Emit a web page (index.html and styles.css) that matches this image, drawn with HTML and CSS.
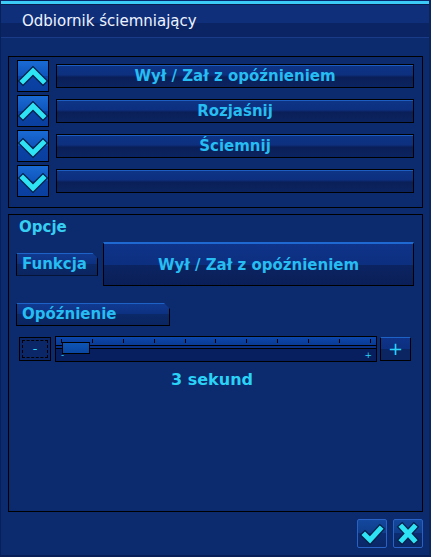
FILE: index.html
```html
<!DOCTYPE html>
<html>
<head>
	<meta charset="utf-8">
	<title>Odbiornik ściemniający</title>
	<link rel="stylesheet" href="styles.css">
</head>
<body>
<div class="window">
	<div class="topbar"></div>
	<div class="titlebar">Odbiornik ściemniający</div>

	<div class="content">
		<!-- lista akcji -->
		<div class="panel actions">
			<div class="row">
				<button type="button" class="arrow">
					<svg width="30" height="30" viewBox="0 0 30 30"><polyline class="edge" points="5,20 15,10 25,20"/><polyline class="fill" points="5,20 15,10 25,20"/></svg>
				</button>
				<div class="bar">Wył / Zał z opóźnieniem</div>
			</div>
			<div class="row">
				<button type="button" class="arrow">
					<svg width="30" height="30" viewBox="0 0 30 30"><polyline class="edge" points="5,20 15,10 25,20"/><polyline class="fill" points="5,20 15,10 25,20"/></svg>
				</button>
				<div class="bar">Rozjaśnij</div>
			</div>
			<div class="row">
				<button type="button" class="arrow">
					<svg width="30" height="30" viewBox="0 0 30 30"><polyline class="edge" points="5,12 15,22 25,12"/><polyline class="fill" points="5,12 15,22 25,12"/></svg>
				</button>
				<div class="bar">Ściemnij</div>
			</div>
			<div class="row">
				<button type="button" class="arrow">
					<svg width="30" height="30" viewBox="0 0 30 30"><polyline class="edge" points="5,12 15,22 25,12"/><polyline class="fill" points="5,12 15,22 25,12"/></svg>
				</button>
				<div class="bar"></div>
			</div>
		</div>

		<!-- opcje -->
		<div class="panel options">
			<div class="heading">Opcje</div>
			<div class="func-row">
				<div class="tab">Funkcja</div>
				<button type="button" class="func-value">Wył / Zał z opóźnieniem</button>
			</div>
			<div class="tab delay-tab">Opóźnienie</div>
			<div class="slider-row">
				<button type="button" class="step minus"><span class="focus">-</span></button>
				<div class="track">
					<div class="ticks">
						<span></span><span></span><span></span><span></span><span></span><span></span>
						<span></span><span></span><span></span><span></span><span></span>
					</div>
					<div class="mid"></div>
					<div class="low"><span>-</span><span>+</span></div>
					<div class="thumb"></div>
				</div>
				<button type="button" class="step plus">+</button>
			</div>
			<div class="value">3 sekund</div>
		</div>

		<div class="footer">
			<button type="button" class="action">
				<svg width="28" height="27" viewBox="0 0 28 27"><polyline class="edge" points="7,15 12,20 22,9"/><polyline class="fill" points="7,15 12,20 22,9"/></svg>
			</button>
			<button type="button" class="action">
				<svg width="28" height="27" viewBox="0 0 28 27"><path class="edge" d="M8 7 L20 20 M20 7 L8 20"/><path class="fill" d="M8 7 L20 20 M20 7 L8 20"/></svg>
			</button>
		</div>
	</div>
</div>
</body>
</html>
```

FILE: styles.css
```css
body
{
	margin:0;
	background-color:#0c2a6e;
	font-family:"DejaVu Sans", sans-serif;
}
.window
{
	width:431px;
	height:557px;
	box-sizing:border-box;
	display:flex;
	flex-direction:column;
	border-left:1px solid #08205a;
	border-right:2px solid #0a2460;
	border-bottom:2px solid #081e56;
}
.topbar
{
	height:5px;
	background:linear-gradient(#0a2a70 0 1px, #3ccaf6 1px 4px, #0a1e50 4px);
}
.titlebar
{
	height:32px;
	line-height:32px;
	padding-left:21px;
	font-size:15px;
	color:#eef3ff;
	background:linear-gradient(#0f2f7a 55%, #0b2564 55%);
	border-bottom:1px solid #1a3c88;
}
.content
{
	flex:1;
	display:flex;
	flex-direction:column;
	padding:0 6px 0 7px;
}
.panel
{
	border:1px solid #000;
}
.actions
{
	margin-top:18px;
	padding:3px 8px 10px 8px;
	display:flex;
	flex-direction:column;
	gap:3px;
}
.row
{
	display:flex;
	align-items:center;
	gap:7px;
}
button
{
	font-family:inherit;
	padding:0;
	cursor:pointer;
}
.arrow
{
	width:32px;
	height:32px;
	border:1px solid #000;
	background:linear-gradient(#1a6ad4, #0e55bc 50%, #0a42a6 50%, #0a3f9e);
	display:flex;
	align-items:center;
	justify-content:center;
}
svg .edge
{
	fill:none;
	stroke:#05204a;
	stroke-width:7.5;
	stroke-linejoin:miter;
	stroke-linecap:square;
}
svg .fill
{
	fill:none;
	stroke:#2ee4f4;
	stroke-width:5;
	stroke-linejoin:miter;
	stroke-linecap:square;
}
.bar
{
	flex:1;
	height:24px;
	box-sizing:border-box;
	border:1px solid #000;
	background:linear-gradient(#1d5cc0 0 1px, #0e3486 1px, #0d2f7e 45%, #0a1f58 55%, #0b2460);
	color:#26bdf2;
	font-weight:bold;
	font-size:15px;
	line-height:22px;
	text-align:center;
}
.options
{
	flex:1;
	margin-top:6px;
	padding:3px 8px 0 7px;
	display:flex;
	flex-direction:column;
}
.heading
{
	color:#36cff2;
	font-weight:bold;
	font-size:15px;
	line-height:19px;
	padding-left:3px;
}
.func-row
{
	display:flex;
	align-items:center;
	gap:5px;
	margin-top:5px;
}
.tab
{
	width:82px;
	height:23px;
	box-sizing:border-box;
	border:1px solid #000;
	border-top:1px solid #1e62c8;
	background:linear-gradient(#103a90, #0d3080 50%, #0b2868 50%, #0a2560);
	clip-path:polygon(0 0, calc(100% - 6px) 0, 100% 6px, 100% 100%, 0 100%);
	color:#26bdf2;
	font-weight:bold;
	font-size:15px;
	line-height:21px;
	padding-left:5px;
}
.func-value
{
	flex:1;
	height:44px;
	border:1px solid #000;
	border-top:2px solid #1f6ad2;
	background:linear-gradient(#0e3388, #0d2f80 50%, #0b2462 50%, #0a1f58);
	color:#26bdf2;
	font-weight:bold;
	font-size:15px;
}
.delay-tab
{
	width:154px;
	margin-top:17px;
}
.slider-row
{
	display:flex;
	align-items:center;
	margin-top:10px;
	padding-left:3px;
}
.step
{
	height:24px;
	border:1px solid #000;
	color:#2ad2f6;
}
.minus
{
	width:32px;
	background:#0b2768;
	padding:2px;
}
.minus .focus
{
	display:block;
	height:100%;
	border:1px dashed #000;
	box-sizing:border-box;
	line-height:16px;
	font-size:13px;
}
.plus
{
	width:31px;
	margin-left:3px;
	border-top:1px solid #1e62c8;
	background:linear-gradient(#0e3388, #0d2f80 50%, #0b2462 50%);
	font-size:18px;
	line-height:18px;
}
.track
{
	position:relative;
	width:322px;
	height:26px;
	box-sizing:border-box;
	margin-left:4px;
	border:1px solid #000;
	display:flex;
	flex-direction:column;
}
.ticks
{
	height:9px;
	display:flex;
	justify-content:space-between;
	padding:0 5px;
	background:linear-gradient(#0c48ac, #0a3a94);
	border-bottom:1px solid #000;
}
.ticks span
{
	width:1px;
	height:4px;
	margin-top:2px;
	background:#000;
}
.mid
{
	height:3px;
	background:#0a3286;
	border-bottom:1px solid #000;
}
.low
{
	flex:1;
	background:#071f5e;
	display:flex;
	justify-content:space-between;
	padding:0 4px 0 5px;
	color:#2ad2f6;
	font-size:9px;
	line-height:12px;
}
.thumb
{
	position:absolute;
	left:6px;
	top:5px;
	width:28px;
	height:12px;
	box-sizing:border-box;
	border:1px solid #000;
	background:linear-gradient(#0e55b4, #0a46a2);
}
.value
{
	margin-top:8px;
	text-align:center;
	color:#2ad2f6;
	font-weight:bold;
	font-size:16px;
	padding-right:6px;
}
.footer
{
	display:flex;
	justify-content:flex-end;
	gap:6px;
	padding:7px 0 7px 0;
}
.action
{
	width:30px;
	height:29px;
	border:1px solid #2a62c4;
	border-radius:2px;
	background:linear-gradient(#13489e, #0f3c8a 50%, #0b2c72 50%, #0a2868);
	display:flex;
	align-items:center;
	justify-content:center;
}
```
